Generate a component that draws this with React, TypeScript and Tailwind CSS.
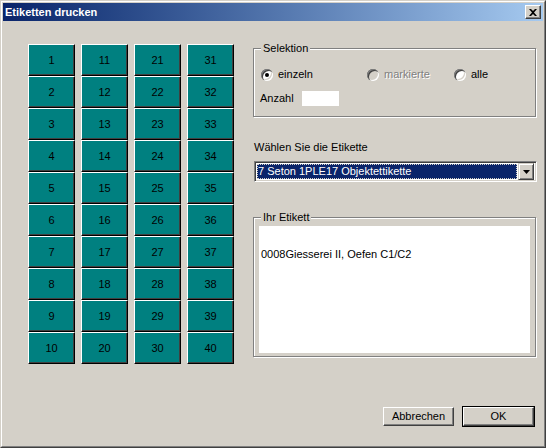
import React from 'react';

const columns = [0, 1, 2, 3];
const rows = [1, 2, 3, 4, 5, 6, 7, 8, 9, 10];

function NumButton({ n }: { n: number }) {
  return (
    <div className="w-[47px] h-[32px] bg-[#008080] border border-t-white border-l-white border-r-black border-b-black shadow-[inset_-1px_-1px_0_#404040] flex items-center justify-center text-[11px] text-black">
      {n}
    </div>
  );
}

function Radio({ checked, disabled, label, width }: { checked?: boolean; disabled?: boolean; label: string; width: string }) {
  return (
    <div className={`flex items-center gap-[5px] ${width}`}>
      <span
        className={`w-[12px] h-[12px] rounded-full flex items-center justify-center shadow-[inset_1px_1px_0_#808080,inset_2px_2px_0_#404040,inset_-1px_-1px_0_#ffffff,inset_-2px_-2px_0_#d4d0c8] ${
          disabled ? 'bg-[#d4d0c8]' : 'bg-white'
        }`}
      >
        {checked && <span className="w-[4px] h-[4px] rounded-full bg-black" />}
      </span>
      <span className={disabled ? 'text-[#808080] [text-shadow:1px_1px_0_#fff]' : 'text-black'}>{label}</span>
    </div>
  );
}

function WinButton({ label, isDefault }: { label: string; isDefault?: boolean }) {
  return (
    <div className={isDefault ? 'border border-black' : 'border border-transparent'}>
      <div className="w-[71px] h-[19px] border border-t-white border-l-white border-r-[#404040] border-b-[#404040] shadow-[inset_-1px_-1px_0_#808080] flex items-center justify-center text-[11px] text-black">
        {label}
      </div>
    </div>
  );
}

export default function App() {
  return (
    <div
      className="w-[546px] h-[448px] bg-[#d4d0c8] border border-t-[#d4d0c8] border-l-[#d4d0c8] border-r-[#404040] border-b-[#404040] text-[11px] leading-[13px] text-black"
      style={{ fontFamily: '"Liberation Sans", Arial, sans-serif' }}
    >
      <div className="h-full border border-t-white border-l-white border-r-[#808080] border-b-[#808080] p-[1px] flex flex-col">
        {/* title bar */}
        <div className="h-[18px] flex items-center justify-between bg-gradient-to-r from-[#0a246a] to-[#a6caf0] pl-[2px] pr-[2px]">
          <span className="text-white font-bold text-[11px]">Etiketten drucken</span>
          <div className="w-[16px] h-[14px] bg-[#d4d0c8] border border-t-white border-l-white border-r-[#404040] border-b-[#404040] shadow-[inset_-1px_-1px_0_#808080] flex items-center justify-center">
            <svg width="8" height="7" viewBox="0 0 8 7">
              <path d="M0 0h2l2 2 2-2h2L5 3.5 8 7H6L4 5 2 7H0l3-3.5z" fill="#000" />
            </svg>
          </div>
        </div>

        {/* body */}
        <div className="flex items-start">
          <div className="ml-[25px] mt-[23px] grid grid-flow-col grid-rows-[repeat(10,32px)] grid-cols-[repeat(4,47px)] gap-x-[6px]">
            {columns.map((c) => rows.map((r) => <NumButton key={c * 10 + r} n={c * 10 + r} />))}
          </div>

          <div className="ml-[19px] mt-[21px] w-[284px] flex flex-col">
            <fieldset className="w-[283px] border border-[#808080] shadow-[1px_1px_0_#fff,inset_1px_1px_0_#fff] pb-[10px]">
              <legend className="ml-[7px] px-[2px] bg-[#d4d0c8]">Selektion</legend>
              <div className="flex items-center pl-[7px] mt-[13px]">
                <Radio checked label="einzeln" width="w-[106px]" />
                <Radio disabled label="markierte" width="w-[87px]" />
                <Radio label="alle" width="w-[60px]" />
              </div>
              <div className="flex items-center pl-[6px] mt-[10px]">
                <span className="w-[42px]">Anzahl</span>
                <div className="w-[37px] h-[15px] bg-white" />
              </div>
            </fieldset>

            <div className="ml-[1px] mt-[24px]">Wählen Sie die Etikette</div>

            <div className="ml-[1px] mt-[7px] w-[283px] h-[21px] bg-white border border-t-[#808080] border-l-[#808080] border-r-white border-b-white shadow-[inset_1px_1px_0_#404040,inset_-1px_-1px_0_#d4d0c8] flex items-center p-[2px] pl-[2px]">
              <div className="flex-1 h-[15px] bg-[#0a246a] text-white flex items-center pl-[1px] outline outline-1 outline-dotted outline-[#d4d0c8] -outline-offset-1 mr-[1px]">
                7 Seton 1PLE17 Objektettikette
              </div>
              <div className="w-[16px] h-[17px] bg-[#d4d0c8] border border-t-[#d4d0c8] border-l-[#d4d0c8] border-r-[#404040] border-b-[#404040] shadow-[inset_1px_1px_0_#fff,inset_-1px_-1px_0_#808080] flex items-center justify-center">
                <svg width="7" height="4" viewBox="0 0 7 4">
                  <path d="M0 0h7L3.5 4z" fill="#000" />
                </svg>
              </div>
            </div>

            <fieldset className="mt-[29px] w-[283px] border border-[#808080] shadow-[1px_1px_0_#fff,inset_1px_1px_0_#fff] pl-[5px] pb-[3px]">
              <legend className="ml-[2px] px-[2px] bg-[#d4d0c8]">Ihr Etikett</legend>
              <div className="mt-[2px] w-[271px] h-[127px] bg-white pl-[2px] pt-[22px]">
                0008Giesserei II, Oefen C1/C2
              </div>
            </fieldset>
          </div>
        </div>

        <div className="flex justify-end gap-[7px] mt-[42px] pr-[8px]">
          <WinButton label="Abbrechen" />
          <WinButton label="OK" isDefault />
        </div>
      </div>
    </div>
  );
}
